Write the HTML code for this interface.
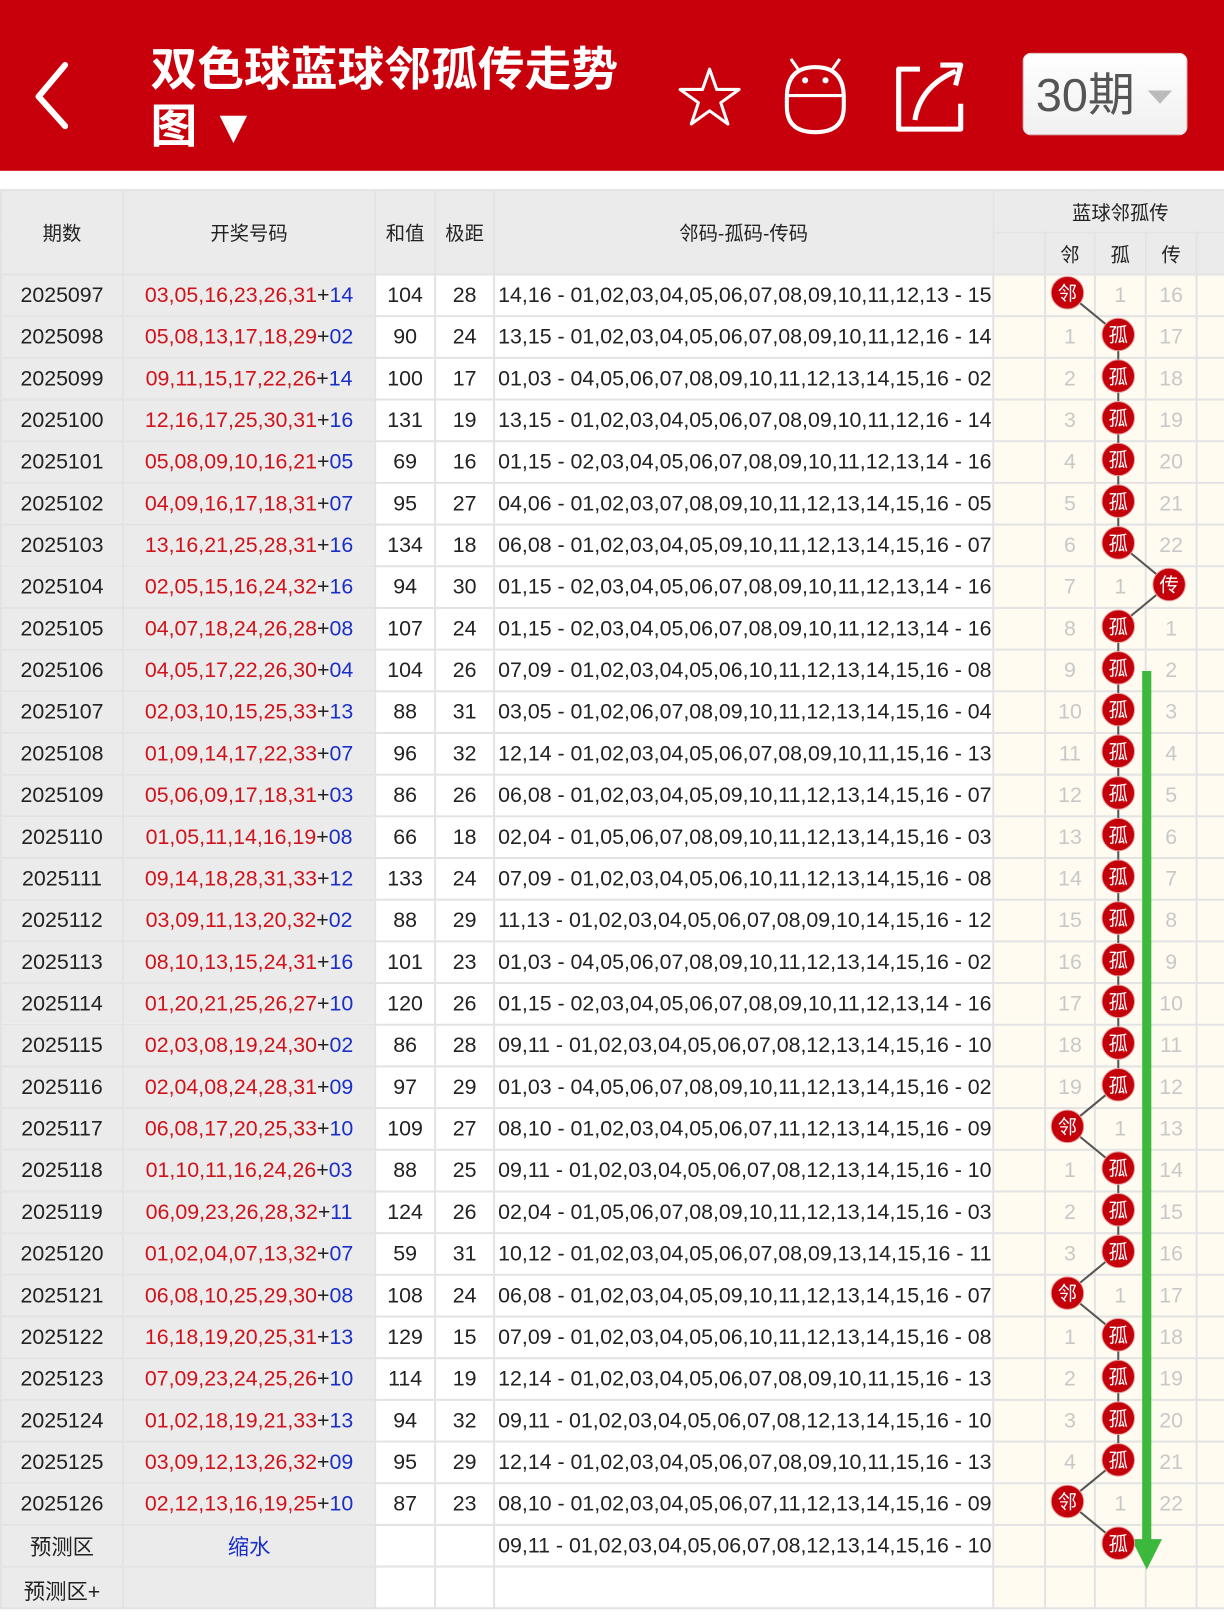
<!DOCTYPE html>
<html><head><meta charset="utf-8">
<style>
*{margin:0;padding:0;box-sizing:border-box}
body{width:1224px;height:1594px;overflow:hidden;background:#fff;font-family:"Liberation Sans","Noto Sans CJK SC",sans-serif;position:relative}
#w{position:absolute;left:0;top:0;width:1204px;height:1568px;transform:scale(1.01661);transform-origin:0 0}
.hd{position:absolute;left:0;top:0;width:1204px;height:168px;background:#c8000b}
.title{position:absolute;left:148px;top:40px;color:#fff;font-size:46px;font-weight:bold;line-height:56px;width:480px}
.btn{position:absolute;left:1006px;top:52px;width:162px;height:81px;border-radius:8px;background:linear-gradient(#fff,#f0f0f0);border:1px solid #ddd;color:#555;font-size:46px;line-height:81px;padding-left:12px}
.btn i{position:absolute;right:14px;top:36px;width:0;height:0;border-left:12px solid transparent;border-right:12px solid transparent;border-top:13px solid #bbb}
table{position:absolute;left:0;top:186px;border-collapse:collapse;table-layout:fixed;width:1226px}
td{border:2px solid #e3e3e3;height:41px;text-align:center;font-size:21px;color:#222;white-space:nowrap;overflow:hidden;padding:0}
thead td{background:#ebebeb;font-size:19px}
td.g{background:#ebebeb}
td.c{background:#fffbf0;color:#c8c8c8}
td.m{border-left:2px dashed #9a3a3a;text-align:left;padding-left:3px;font-size:21px}
.r{color:#d0121b}.b{color:#1a2fc8}
svg.ov{position:absolute;left:0;top:0}
</style></head><body><div id="w">
<div class="hd">
<svg width="1224" height="168" style="position:absolute;left:0;top:0">
<polyline points="64,64 38,95 64,124" fill="none" stroke="#fff" stroke-width="6" stroke-linecap="round" stroke-linejoin="round"/>
<polygon points="698,68 705,88 727,88 709,101 716,122 698,109 680,122 687,101 669,88 691,88" fill="none" stroke="#fff" stroke-width="3" stroke-linejoin="round"/>
<path d="M774,96 Q774,66 802,66 Q830,66 830,96 L830,105 Q830,130 802,130 Q774,130 774,105 Z" fill="none" stroke="#fff" stroke-width="4"/>
<line x1="774" y1="94" x2="830" y2="94" stroke="#fff" stroke-width="3"/>
<line x1="785" y1="68" x2="778" y2="58" stroke="#fff" stroke-width="3"/><line x1="819" y1="68" x2="826" y2="58" stroke="#fff" stroke-width="3"/>
<circle cx="792" cy="79" r="3" fill="#fff"/><circle cx="812" cy="79" r="3" fill="#fff"/>
<path d="M905,68 L884,68 L884,127 L945,127 L945,102" fill="none" stroke="#fff" stroke-width="5" stroke-linejoin="round"/>
<path d="M900,118 Q905,85 940,70" fill="none" stroke="#fff" stroke-width="5"/>
<polyline points="925,64 945,64 940,84" fill="none" stroke="#fff" stroke-width="5" stroke-linejoin="round"/>
</svg>
<div class="title">双色球蓝球邻孤传走势<br>图 ▼</div>
<div class="btn">30期<i></i></div>
</div>
<table>
<colgroup><col style="width:120px"><col style="width:248px"><col style="width:59px"><col style="width:58px"><col style="width:491px"><col style="width:51px"><col style="width:49px"><col style="width:50px"><col style="width:50px"><col style="width:50px"></colgroup>
<thead>
<tr><td rowspan="2">期数</td><td rowspan="2">开奖号码</td><td rowspan="2">和值</td><td rowspan="2">极距</td><td rowspan="2">邻码-孤码-传码</td><td colspan="5" style="height:42px">蓝球邻孤传</td></tr>
<tr><td style="height:40px"></td><td>邻</td><td>孤</td><td>传</td><td></td></tr>
</thead>
<tbody>
<tr><td class="g">2025097</td><td class="g"><span class="r">03,05,16,23,26,31</span>+<span class="b">14</span></td><td>104</td><td>28</td><td class="m">14,16 - 01,02,03,04,05,06,07,08,09,10,11,12,13 - 15</td><td class="c"></td><td class="c"></td><td class="c">1</td><td class="c">16</td><td class="c"></td></tr>
<tr><td class="g">2025098</td><td class="g"><span class="r">05,08,13,17,18,29</span>+<span class="b">02</span></td><td>90</td><td>24</td><td class="m">13,15 - 01,02,03,04,05,06,07,08,09,10,11,12,16 - 14</td><td class="c"></td><td class="c">1</td><td class="c"></td><td class="c">17</td><td class="c"></td></tr>
<tr><td class="g">2025099</td><td class="g"><span class="r">09,11,15,17,22,26</span>+<span class="b">14</span></td><td>100</td><td>17</td><td class="m">01,03 - 04,05,06,07,08,09,10,11,12,13,14,15,16 - 02</td><td class="c"></td><td class="c">2</td><td class="c"></td><td class="c">18</td><td class="c"></td></tr>
<tr><td class="g">2025100</td><td class="g"><span class="r">12,16,17,25,30,31</span>+<span class="b">16</span></td><td>131</td><td>19</td><td class="m">13,15 - 01,02,03,04,05,06,07,08,09,10,11,12,16 - 14</td><td class="c"></td><td class="c">3</td><td class="c"></td><td class="c">19</td><td class="c"></td></tr>
<tr><td class="g">2025101</td><td class="g"><span class="r">05,08,09,10,16,21</span>+<span class="b">05</span></td><td>69</td><td>16</td><td class="m">01,15 - 02,03,04,05,06,07,08,09,10,11,12,13,14 - 16</td><td class="c"></td><td class="c">4</td><td class="c"></td><td class="c">20</td><td class="c"></td></tr>
<tr><td class="g">2025102</td><td class="g"><span class="r">04,09,16,17,18,31</span>+<span class="b">07</span></td><td>95</td><td>27</td><td class="m">04,06 - 01,02,03,07,08,09,10,11,12,13,14,15,16 - 05</td><td class="c"></td><td class="c">5</td><td class="c"></td><td class="c">21</td><td class="c"></td></tr>
<tr><td class="g">2025103</td><td class="g"><span class="r">13,16,21,25,28,31</span>+<span class="b">16</span></td><td>134</td><td>18</td><td class="m">06,08 - 01,02,03,04,05,09,10,11,12,13,14,15,16 - 07</td><td class="c"></td><td class="c">6</td><td class="c"></td><td class="c">22</td><td class="c"></td></tr>
<tr><td class="g">2025104</td><td class="g"><span class="r">02,05,15,16,24,32</span>+<span class="b">16</span></td><td>94</td><td>30</td><td class="m">01,15 - 02,03,04,05,06,07,08,09,10,11,12,13,14 - 16</td><td class="c"></td><td class="c">7</td><td class="c">1</td><td class="c"></td><td class="c"></td></tr>
<tr><td class="g">2025105</td><td class="g"><span class="r">04,07,18,24,26,28</span>+<span class="b">08</span></td><td>107</td><td>24</td><td class="m">01,15 - 02,03,04,05,06,07,08,09,10,11,12,13,14 - 16</td><td class="c"></td><td class="c">8</td><td class="c"></td><td class="c">1</td><td class="c"></td></tr>
<tr><td class="g">2025106</td><td class="g"><span class="r">04,05,17,22,26,30</span>+<span class="b">04</span></td><td>104</td><td>26</td><td class="m">07,09 - 01,02,03,04,05,06,10,11,12,13,14,15,16 - 08</td><td class="c"></td><td class="c">9</td><td class="c"></td><td class="c">2</td><td class="c"></td></tr>
<tr><td class="g">2025107</td><td class="g"><span class="r">02,03,10,15,25,33</span>+<span class="b">13</span></td><td>88</td><td>31</td><td class="m">03,05 - 01,02,06,07,08,09,10,11,12,13,14,15,16 - 04</td><td class="c"></td><td class="c">10</td><td class="c"></td><td class="c">3</td><td class="c"></td></tr>
<tr><td class="g">2025108</td><td class="g"><span class="r">01,09,14,17,22,33</span>+<span class="b">07</span></td><td>96</td><td>32</td><td class="m">12,14 - 01,02,03,04,05,06,07,08,09,10,11,15,16 - 13</td><td class="c"></td><td class="c">11</td><td class="c"></td><td class="c">4</td><td class="c"></td></tr>
<tr><td class="g">2025109</td><td class="g"><span class="r">05,06,09,17,18,31</span>+<span class="b">03</span></td><td>86</td><td>26</td><td class="m">06,08 - 01,02,03,04,05,09,10,11,12,13,14,15,16 - 07</td><td class="c"></td><td class="c">12</td><td class="c"></td><td class="c">5</td><td class="c"></td></tr>
<tr><td class="g">2025110</td><td class="g"><span class="r">01,05,11,14,16,19</span>+<span class="b">08</span></td><td>66</td><td>18</td><td class="m">02,04 - 01,05,06,07,08,09,10,11,12,13,14,15,16 - 03</td><td class="c"></td><td class="c">13</td><td class="c"></td><td class="c">6</td><td class="c"></td></tr>
<tr><td class="g">2025111</td><td class="g"><span class="r">09,14,18,28,31,33</span>+<span class="b">12</span></td><td>133</td><td>24</td><td class="m">07,09 - 01,02,03,04,05,06,10,11,12,13,14,15,16 - 08</td><td class="c"></td><td class="c">14</td><td class="c"></td><td class="c">7</td><td class="c"></td></tr>
<tr><td class="g">2025112</td><td class="g"><span class="r">03,09,11,13,20,32</span>+<span class="b">02</span></td><td>88</td><td>29</td><td class="m">11,13 - 01,02,03,04,05,06,07,08,09,10,14,15,16 - 12</td><td class="c"></td><td class="c">15</td><td class="c"></td><td class="c">8</td><td class="c"></td></tr>
<tr><td class="g">2025113</td><td class="g"><span class="r">08,10,13,15,24,31</span>+<span class="b">16</span></td><td>101</td><td>23</td><td class="m">01,03 - 04,05,06,07,08,09,10,11,12,13,14,15,16 - 02</td><td class="c"></td><td class="c">16</td><td class="c"></td><td class="c">9</td><td class="c"></td></tr>
<tr><td class="g">2025114</td><td class="g"><span class="r">01,20,21,25,26,27</span>+<span class="b">10</span></td><td>120</td><td>26</td><td class="m">01,15 - 02,03,04,05,06,07,08,09,10,11,12,13,14 - 16</td><td class="c"></td><td class="c">17</td><td class="c"></td><td class="c">10</td><td class="c"></td></tr>
<tr><td class="g">2025115</td><td class="g"><span class="r">02,03,08,19,24,30</span>+<span class="b">02</span></td><td>86</td><td>28</td><td class="m">09,11 - 01,02,03,04,05,06,07,08,12,13,14,15,16 - 10</td><td class="c"></td><td class="c">18</td><td class="c"></td><td class="c">11</td><td class="c"></td></tr>
<tr><td class="g">2025116</td><td class="g"><span class="r">02,04,08,24,28,31</span>+<span class="b">09</span></td><td>97</td><td>29</td><td class="m">01,03 - 04,05,06,07,08,09,10,11,12,13,14,15,16 - 02</td><td class="c"></td><td class="c">19</td><td class="c"></td><td class="c">12</td><td class="c"></td></tr>
<tr><td class="g">2025117</td><td class="g"><span class="r">06,08,17,20,25,33</span>+<span class="b">10</span></td><td>109</td><td>27</td><td class="m">08,10 - 01,02,03,04,05,06,07,11,12,13,14,15,16 - 09</td><td class="c"></td><td class="c"></td><td class="c">1</td><td class="c">13</td><td class="c"></td></tr>
<tr><td class="g">2025118</td><td class="g"><span class="r">01,10,11,16,24,26</span>+<span class="b">03</span></td><td>88</td><td>25</td><td class="m">09,11 - 01,02,03,04,05,06,07,08,12,13,14,15,16 - 10</td><td class="c"></td><td class="c">1</td><td class="c"></td><td class="c">14</td><td class="c"></td></tr>
<tr><td class="g">2025119</td><td class="g"><span class="r">06,09,23,26,28,32</span>+<span class="b">11</span></td><td>124</td><td>26</td><td class="m">02,04 - 01,05,06,07,08,09,10,11,12,13,14,15,16 - 03</td><td class="c"></td><td class="c">2</td><td class="c"></td><td class="c">15</td><td class="c"></td></tr>
<tr><td class="g">2025120</td><td class="g"><span class="r">01,02,04,07,13,32</span>+<span class="b">07</span></td><td>59</td><td>31</td><td class="m">10,12 - 01,02,03,04,05,06,07,08,09,13,14,15,16 - 11</td><td class="c"></td><td class="c">3</td><td class="c"></td><td class="c">16</td><td class="c"></td></tr>
<tr><td class="g">2025121</td><td class="g"><span class="r">06,08,10,25,29,30</span>+<span class="b">08</span></td><td>108</td><td>24</td><td class="m">06,08 - 01,02,03,04,05,09,10,11,12,13,14,15,16 - 07</td><td class="c"></td><td class="c"></td><td class="c">1</td><td class="c">17</td><td class="c"></td></tr>
<tr><td class="g">2025122</td><td class="g"><span class="r">16,18,19,20,25,31</span>+<span class="b">13</span></td><td>129</td><td>15</td><td class="m">07,09 - 01,02,03,04,05,06,10,11,12,13,14,15,16 - 08</td><td class="c"></td><td class="c">1</td><td class="c"></td><td class="c">18</td><td class="c"></td></tr>
<tr><td class="g">2025123</td><td class="g"><span class="r">07,09,23,24,25,26</span>+<span class="b">10</span></td><td>114</td><td>19</td><td class="m">12,14 - 01,02,03,04,05,06,07,08,09,10,11,15,16 - 13</td><td class="c"></td><td class="c">2</td><td class="c"></td><td class="c">19</td><td class="c"></td></tr>
<tr><td class="g">2025124</td><td class="g"><span class="r">01,02,18,19,21,33</span>+<span class="b">13</span></td><td>94</td><td>32</td><td class="m">09,11 - 01,02,03,04,05,06,07,08,12,13,14,15,16 - 10</td><td class="c"></td><td class="c">3</td><td class="c"></td><td class="c">20</td><td class="c"></td></tr>
<tr><td class="g">2025125</td><td class="g"><span class="r">03,09,12,13,26,32</span>+<span class="b">09</span></td><td>95</td><td>29</td><td class="m">12,14 - 01,02,03,04,05,06,07,08,09,10,11,15,16 - 13</td><td class="c"></td><td class="c">4</td><td class="c"></td><td class="c">21</td><td class="c"></td></tr>
<tr><td class="g">2025126</td><td class="g"><span class="r">02,12,13,16,19,25</span>+<span class="b">10</span></td><td>87</td><td>23</td><td class="m">08,10 - 01,02,03,04,05,06,07,11,12,13,14,15,16 - 09</td><td class="c"></td><td class="c"></td><td class="c">1</td><td class="c">22</td><td class="c"></td></tr>
<tr><td class="g">预测区</td><td class="g b">缩水</td><td></td><td></td><td class="m">09,11 - 01,02,03,04,05,06,07,08,12,13,14,15,16 - 10</td><td class="c"></td><td class="c"></td><td class="c"></td><td class="c"></td><td class="c"></td></tr>
<tr><td class="g" style="vertical-align:top;padding-top:8px">预测区+</td><td class="g"></td><td></td><td></td><td class="m"></td><td class="c"></td><td class="c"></td><td class="c"></td><td class="c"></td><td class="c"></td></tr>
</tbody></table>
<svg class="ov" width="1224" height="1594">
<polyline fill="none" stroke="#555" stroke-width="2" points="1050,288 1100,329 1100,370 1100,411 1100,452 1100,493 1100,534 1150,575 1100,616 1100,657 1100,698 1100,739 1100,780 1100,821 1100,862 1100,903 1100,944 1100,985 1100,1026 1100,1067 1050,1108 1100,1149 1100,1190 1100,1231 1050,1272 1100,1313 1100,1354 1100,1395 1100,1436 1050,1477 1100,1518"/>
<line x1="1128" y1="660" x2="1128" y2="1518" stroke="#3cb83c" stroke-width="9"/>
<polygon points="1113,1514 1143,1514 1128,1544" fill="#3cb83c"/>
<g fill="#c4000a" stroke="#e8a0a0" stroke-width="1">
<circle cx="1050" cy="288" r="16"/><circle cx="1100" cy="329" r="16"/><circle cx="1100" cy="370" r="16"/><circle cx="1100" cy="411" r="16"/><circle cx="1100" cy="452" r="16"/><circle cx="1100" cy="493" r="16"/><circle cx="1100" cy="534" r="16"/><circle cx="1150" cy="575" r="16"/><circle cx="1100" cy="616" r="16"/><circle cx="1100" cy="657" r="16"/><circle cx="1100" cy="698" r="16"/><circle cx="1100" cy="739" r="16"/><circle cx="1100" cy="780" r="16"/><circle cx="1100" cy="821" r="16"/><circle cx="1100" cy="862" r="16"/><circle cx="1100" cy="903" r="16"/><circle cx="1100" cy="944" r="16"/><circle cx="1100" cy="985" r="16"/><circle cx="1100" cy="1026" r="16"/><circle cx="1100" cy="1067" r="16"/><circle cx="1050" cy="1108" r="16"/><circle cx="1100" cy="1149" r="16"/><circle cx="1100" cy="1190" r="16"/><circle cx="1100" cy="1231" r="16"/><circle cx="1050" cy="1272" r="16"/><circle cx="1100" cy="1313" r="16"/><circle cx="1100" cy="1354" r="16"/><circle cx="1100" cy="1395" r="16"/><circle cx="1100" cy="1436" r="16"/><circle cx="1050" cy="1477" r="16"/><circle cx="1100" cy="1518" r="16"/>
</g>
<g fill="#fff" font-size="19" text-anchor="middle" font-family="Liberation Sans,Noto Sans CJK SC,sans-serif">
<text x="1050" y="295">邻</text><text x="1100" y="336">孤</text><text x="1100" y="377">孤</text><text x="1100" y="418">孤</text><text x="1100" y="459">孤</text><text x="1100" y="500">孤</text><text x="1100" y="541">孤</text><text x="1150" y="582">传</text><text x="1100" y="623">孤</text><text x="1100" y="664">孤</text><text x="1100" y="705">孤</text><text x="1100" y="746">孤</text><text x="1100" y="787">孤</text><text x="1100" y="828">孤</text><text x="1100" y="869">孤</text><text x="1100" y="910">孤</text><text x="1100" y="951">孤</text><text x="1100" y="992">孤</text><text x="1100" y="1033">孤</text><text x="1100" y="1074">孤</text><text x="1050" y="1115">邻</text><text x="1100" y="1156">孤</text><text x="1100" y="1197">孤</text><text x="1100" y="1238">孤</text><text x="1050" y="1279">邻</text><text x="1100" y="1320">孤</text><text x="1100" y="1361">孤</text><text x="1100" y="1402">孤</text><text x="1100" y="1443">孤</text><text x="1050" y="1484">邻</text><text x="1100" y="1525">孤</text>
</g>
</svg>
</div>
</body></html>
